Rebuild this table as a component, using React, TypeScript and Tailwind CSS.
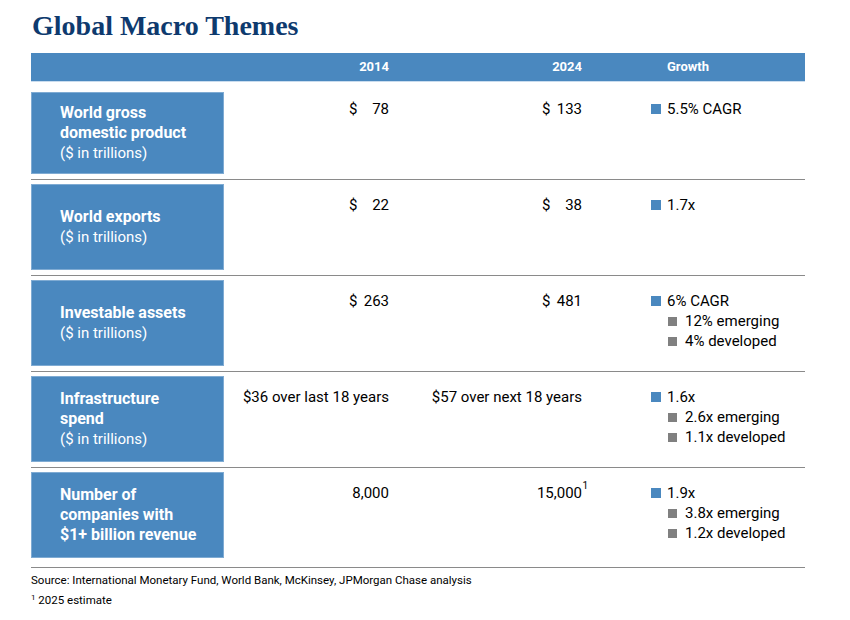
import React from 'react';

type Growth = { main: string; subs?: string[] };

interface RowData {
  label: string[];
  note?: string;
  v2014: React.ReactNode;
  v2024: React.ReactNode;
  growth: Growth;
}

function Dollar({ n }: { n: string }) {
  return (
    <span className="inline-flex w-[40px] justify-between">
      <span>$</span>
      <span>{n}</span>
    </span>
  );
}

const rows: RowData[] = [
  {
    label: ['World gross', 'domestic product'],
    note: '($ in trillions)',
    v2014: <Dollar n="78" />,
    v2024: <Dollar n="133" />,
    growth: { main: '5.5% CAGR' }
  },
  {
    label: ['World exports'],
    note: '($ in trillions)',
    v2014: <Dollar n="22" />,
    v2024: <Dollar n="38" />,
    growth: { main: '1.7x' }
  },
  {
    label: ['Investable assets'],
    note: '($ in trillions)',
    v2014: <Dollar n="263" />,
    v2024: <Dollar n="481" />,
    growth: { main: '6% CAGR', subs: ['12% emerging', '4% developed'] }
  },
  {
    label: ['Infrastructure', 'spend'],
    note: '($ in trillions)',
    v2014: '$36 over last 18 years',
    v2024: '$57 over next 18 years',
    growth: { main: '1.6x', subs: ['2.6x emerging', '1.1x developed'] }
  },
  {
    label: ['Number of', 'companies with', '$1+ billion revenue'],
    v2014: '8,000',
    v2024: (
      <span className="relative">
        15,000<span className="absolute -right-[6px] -top-[3px] text-[10px] leading-[12px]">1</span>
      </span>
    ),
    growth: { main: '1.9x', subs: ['3.8x emerging', '1.2x developed'] }
  }
];

const font = { fontFamily: '"Liberation Sans Narrow", Roboto, "Open Sans", sans-serif' };

function Row({ row, index }: { row: RowData; index: number }) {
  const first = index === 0;
  const last = index === rows.length - 1;
  const top = first ? 'mt-[7px]' : 'mt-[11px]';
  return (
    <div
      className={`grid grid-cols-[193px_194px_193px_194px] border-b border-[#8a8a8a] ${
        first ? 'pt-[10px]' : 'pt-[4px]'
      } ${last ? 'pb-[9px]' : 'pb-[5px]'}`}
    >
      <div
        className={`flex flex-col justify-center bg-[#4a88bf] border border-[#7fabd3] pl-[28px] text-white ${
          first ? 'h-[82px]' : 'h-[86px]'
        }`}
      >
        {row.label.map((l) => (
          <div key={l} className="text-[16px] font-bold leading-[20px]">
            {l}
          </div>
        ))}
        {row.note && <div className="text-[15px] leading-[20px]">{row.note}</div>}
      </div>
      <div className={`flex justify-end pr-[29px] text-[15px] leading-[20px] text-black ${top}`}>{row.v2014}</div>
      <div className={`flex justify-end pr-[29px] text-[15px] leading-[20px] text-black ${top}`}>{row.v2024}</div>
      <div className={`pl-[40px] text-[15px] leading-[20px] text-black ${top}`}>
        <div className="flex items-center">
          <span className="w-[10px] h-[10px] bg-[#4a88bf] mr-[6px]" />
          {row.growth.main}
        </div>
        {row.growth.subs?.map((s) => (
          <div key={s} className="flex items-center pl-[17px]">
            <span className="w-[9px] h-[9px] bg-[#808080] mr-[8px]" />
            {s}
          </div>
        ))}
      </div>
    </div>
  );
}

export default function App() {
  return (
    <div className="w-[850px] h-[620px] bg-white overflow-hidden" style={font}>
      <div className="pl-[32px] pt-[10px] h-[53px]">
        <h1
          className="text-[28px] font-bold leading-[32px] text-[#0e3a6e]"
          style={{ fontFamily: '"Liberation Serif", "Times New Roman", serif' }}
        >
          Global Macro Themes
        </h1>
      </div>
      <div className="ml-[31px] w-[774px]">
        <div className="grid grid-cols-[193px_194px_193px_194px] h-[29px] bg-[#4a88bf] text-white text-[13px] font-bold items-center border-b border-[#c9dcee]">
          <div />
          <div className="text-right pr-[29px]">2014</div>
          <div className="text-right pr-[29px]">2024</div>
          <div className="pl-[56px]">Growth</div>
        </div>
        {rows.map((r, i) => (
          <Row key={i} row={r} index={i} />
        ))}
        <div className="text-[11.5px] leading-[16px] text-black mt-[4px]">
          Source: International Monetary Fund, World Bank, McKinsey, JPMorgan Chase analysis
        </div>
        <div className="text-[11.5px] leading-[16px] text-black mt-[4px]">
          <sup className="text-[8px]">1</sup> 2025 estimate
        </div>
      </div>
    </div>
  );
}
